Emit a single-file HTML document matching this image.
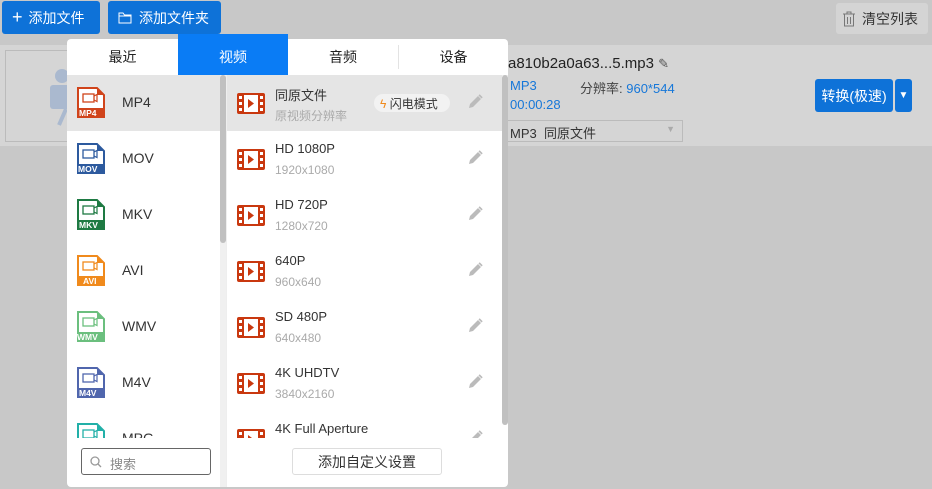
<!DOCTYPE html>
<html><head><meta charset="utf-8"><style>
*{margin:0;padding:0;box-sizing:border-box}
body{width:932px;height:489px;background:#c8c8c8;position:relative;overflow:hidden;font-family:"Liberation Sans","Noto Sans CJK SC",sans-serif;font-size:13px;color:#333}
.abs{position:absolute}
.btn{background:#0e72d8;color:#fff;border-radius:3px;font-size:14px;display:flex;align-items:center}
.row{left:0;top:45px;width:932px;height:101px;background:#d5d5d5}
.panel{left:67px;top:39px;width:441px;height:448px;background:#fff;border-radius:4px;overflow:hidden}
.tab{top:0;height:36px;display:flex;align-items:center;justify-content:center;font-size:14px;color:#222}
.li{position:absolute;left:0;width:153px;height:56px}
.li .n{position:absolute;left:55px;top:19px;font-size:14px;color:#333}
.li .lb{position:absolute;color:#fff;font-size:8.5px;font-weight:bold;top:33px}
.ri{position:absolute;left:160px;width:275px;height:56px}
.ri .t{position:absolute;left:48px;top:10px;font-size:13px;color:#333}
.ri .s{position:absolute;left:48px;top:32px;font-size:12px;color:#aaa}
.ri svg.f{position:absolute;left:10px;top:18px}
.ri .p{position:absolute;left:240px;top:19px}
</style></head><body>
<div class="abs btn" style="left:2px;top:1px;width:98px;height:33px;padding-left:10px"><span style="font-size:18px;margin-right:6px">+</span>添加文件</div>
<div class="abs btn" style="left:108px;top:1px;width:113px;height:33px;padding-left:10px"><svg width="14" height="12" style="margin-right:7px"><path d="M1 1h4l1.5 2H13v8H1z M1 4h12" fill="none" stroke="#fff"/></svg>添加文件夹</div>
<div class="abs" style="left:836px;top:3px;width:92px;height:31px;background:#d4d4d4;border-radius:3px;display:flex;align-items:center;padding-left:6px;font-size:14px;color:#333"><svg width="14" height="16" style="margin-right:6px"><path d="M1 3h12M5 3V1h4v2M2.5 3v12h9V3M5.5 6v7M8.5 6v7" fill="none" stroke="#777"/></svg>清空列表</div>
<div class="abs row"></div>
<div class="abs" style="left:5px;top:50px;width:70px;height:92px;border:1px solid #bbb"></div>
<svg class="abs" style="left:48px;top:68px" width="30" height="58"><circle cx="14" cy="8" r="7" fill="#aab9cf"/><rect x="2" y="17" width="22" height="24" rx="3" fill="#aab9cf"/><path d="M18 41l-7 16" stroke="#aab9cf" stroke-width="4"/><path d="M24 22l6-3v16l-6-3z" fill="#aab9cf"/></svg>
<div class="abs" style="left:508px;top:55px;font-size:15px;color:#222">a810b2a0a63...5.mp3 <span style="font-size:13px;color:#555">✎</span></div>
<div class="abs" style="left:510px;top:78px;color:#1677d9">MP3</div>
<div class="abs" style="left:580px;top:78px;color:#444">分辨率: <span style="color:#1677d9">960*544</span></div>
<div class="abs" style="left:510px;top:97px;color:#1677d9">00:00:28</div>
<div class="abs" style="left:505px;top:120px;width:178px;height:22px;border:1px solid #bbb;padding:2px 4px;color:#333">MP3&nbsp;&nbsp;同原文件<span style="position:absolute;right:7px;top:3px;color:#aaa;font-size:9px">▼</span></div>
<div class="abs btn" style="left:815px;top:79px;width:78px;height:33px;justify-content:center">转换(极速)</div>
<div class="abs btn" style="left:895px;top:79px;width:17px;height:33px;justify-content:center;font-size:10px">▼</div>

<div class="abs panel">
<div class="tab abs" style="left:0;width:111px">最近</div>
<div class="tab abs" style="left:221px;width:110px">音频</div>
<div class="abs" style="left:331px;top:6px;width:1px;height:24px;background:#e3e3e3"></div>
<div class="tab abs" style="left:332px;width:109px">设备</div>
<div class="abs" style="left:0;top:36px;width:441px;height:1px;background:#eee"></div>
<div class="abs" style="left:0;top:36px;width:153px;height:56px;background:#e5e5e5"></div>
<div class="abs" style="left:153px;top:36px;width:7px;height:412px;background:#f0f0f0"></div>
<div class="abs" style="left:153px;top:36px;width:6px;height:168px;background:#c0c0c0;border-radius:3px"></div>
<div class="abs" style="left:159px;top:36px;width:1px;height:412px;background:#eee"></div>
<div class="abs" style="left:160px;top:36px;width:275px;height:56px;background:#e5e5e5"></div>
<div class="abs" style="left:435px;top:36px;width:6px;height:350px;background:#c0c0c0;border-radius:3px"></div>
<div class="abs" style="left:14px;top:409px;width:130px;height:27px;border:1px solid #666;border-radius:3px;color:#888;padding:5px 0 0 28px;font-size:13px">搜索<svg class="abs" style="left:8px;top:7px" width="12" height="12"><circle cx="5" cy="5" r="4" fill="none" stroke="#999" stroke-width="1.3"/><path d="M8 8l3 3" stroke="#999" stroke-width="1.3"/></svg></div>
<div class="abs" style="left:225px;top:409px;width:150px;height:27px;border:1px solid #ddd;border-radius:3px;display:flex;align-items:center;justify-content:center;font-size:14px;color:#333">添加自定义设置</div>
</div>
<div class="abs" style="left:178px;top:34px;width:110px;height:41px;background:#0a7cf5;color:#fff;font-size:14px;display:flex;align-items:center;justify-content:center;padding-top:4px">视频</div>

<div class="abs" style="left:67px;top:75px;width:153px;height:363px;overflow:hidden">
<svg width="0" height="0" style="position:absolute"><defs>
<symbol id="fi" viewBox="0 0 28 31"><path d="M1 1h19l7 7v22H1z" fill="#fff" stroke="currentColor" stroke-width="2"/><path d="M20 1v7h7z" fill="currentColor"/><rect x="0" y="21" width="28" height="10" fill="currentColor"/><rect x="6" y="7" width="11" height="8" fill="none" stroke="currentColor" stroke-width="1.3"/><path d="M17 9l3-1.5v7L17 13" fill="none" stroke="currentColor" stroke-width="1.2"/></symbol>
</defs></svg>
<div class="li" style="top:0"><svg class="abs" style="left:10px;top:12px;color:#d0441b" width="28" height="31"><use href="#fi"/></svg><span class="lb" style="left:12px">MP4</span><span class="n">MP4</span></div>
<div class="li" style="top:56px"><svg class="abs" style="left:10px;top:12px;color:#2d5a9e" width="28" height="31"><use href="#fi"/></svg><span class="lb" style="left:11px">MOV</span><span class="n">MOV</span></div>
<div class="li" style="top:112px"><svg class="abs" style="left:10px;top:12px;color:#1e7a43" width="28" height="31"><use href="#fi"/></svg><span class="lb" style="left:12px">MKV</span><span class="n">MKV</span></div>
<div class="li" style="top:168px"><svg class="abs" style="left:10px;top:12px;color:#f08a1c" width="28" height="31"><use href="#fi"/></svg><span class="lb" style="left:16px">AVI</span><span class="n">AVI</span></div>
<div class="li" style="top:224px"><svg class="abs" style="left:10px;top:12px;color:#6bbf7e" width="28" height="31"><use href="#fi"/></svg><span class="lb" style="left:10px">WMV</span><span class="n">WMV</span></div>
<div class="li" style="top:280px"><svg class="abs" style="left:10px;top:12px;color:#5066ad" width="28" height="31"><use href="#fi"/></svg><span class="lb" style="left:12px">M4V</span><span class="n">M4V</span></div>
<div class="li" style="top:336px"><svg class="abs" style="left:10px;top:12px;color:#22b0a8" width="28" height="31"><use href="#fi"/></svg><span class="n">MPG</span></div>
</div>

<div class="abs" style="left:67px;top:75px;width:435px;height:363px;overflow:hidden">
<svg width="0" height="0" style="position:absolute"><defs>
<symbol id="fm" viewBox="0 0 28 21"><rect x="0" y="0" width="28" height="21" rx="2" fill="#c9380f"/><rect x="7" y="2" width="14" height="17" fill="#fff"/><path d="M11 6l6 4.5-6 4.5z" fill="#c9380f"/><rect x="2" y="3" width="3" height="3" fill="#fff"/><rect x="2" y="9" width="3" height="3" fill="#fff"/><rect x="2" y="15" width="3" height="3" fill="#fff"/><rect x="23" y="3" width="3" height="3" fill="#fff"/><rect x="23" y="9" width="3" height="3" fill="#fff"/><rect x="23" y="15" width="3" height="3" fill="#fff"/></symbol>
<symbol id="pe" viewBox="0 0 16 16"><path d="M2 14l1-4 8-8 3 3-8 8z" fill="#bbb"/><path d="M11.5 1.5l1.2-1.2 3 3-1.2 1.2z" fill="#bbb"/></symbol>
</defs></svg>
<div class="ri" style="top:0"><svg class="f" width="28" height="21"><use href="#fm"/></svg><span class="t">同原文件</span><span class="s">原视频分辨率</span><span class="abs" style="left:147px;top:19px;width:76px;height:18px;background:#f2f2f2;border-radius:9px;font-size:12px;padding:1px 0 0 6px"><span style="color:#f08a1c">ϟ</span> 闪电模式</span><svg class="p" width="16" height="16"><use href="#pe"/></svg></div>
<div class="ri" style="top:56px"><svg class="f" width="28" height="21"><use href="#fm"/></svg><span class="t">HD 1080P</span><span class="s">1920x1080</span><svg class="p" width="16" height="16"><use href="#pe"/></svg></div>
<div class="ri" style="top:112px"><svg class="f" width="28" height="21"><use href="#fm"/></svg><span class="t">HD 720P</span><span class="s">1280x720</span><svg class="p" width="16" height="16"><use href="#pe"/></svg></div>
<div class="ri" style="top:168px"><svg class="f" width="28" height="21"><use href="#fm"/></svg><span class="t">640P</span><span class="s">960x640</span><svg class="p" width="16" height="16"><use href="#pe"/></svg></div>
<div class="ri" style="top:224px"><svg class="f" width="28" height="21"><use href="#fm"/></svg><span class="t">SD 480P</span><span class="s">640x480</span><svg class="p" width="16" height="16"><use href="#pe"/></svg></div>
<div class="ri" style="top:280px"><svg class="f" width="28" height="21"><use href="#fm"/></svg><span class="t">4K UHDTV</span><span class="s">3840x2160</span><svg class="p" width="16" height="16"><use href="#pe"/></svg></div>
<div class="ri" style="top:336px"><svg class="f" width="28" height="21"><use href="#fm"/></svg><span class="t">4K Full Aperture</span><svg class="p" width="16" height="16"><use href="#pe"/></svg></div>
</div>
</body></html>
